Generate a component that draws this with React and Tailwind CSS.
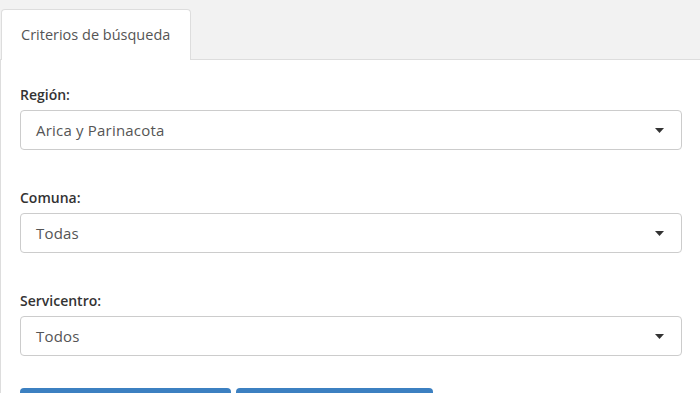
import React from 'react';

const fields = [
  { label: 'Región:', value: 'Arica y Parinacota' },
  { label: 'Comuna:', value: 'Todas' },
  { label: 'Servicentro:', value: 'Todos' },
];

const Caret = () => (
  <svg width="9" height="5" viewBox="0 0 9 5" className="shrink-0">
    <path d="M0 0 L9 0 L4.5 5 Z" fill="#333" />
  </svg>
);

const SelectField = ({ label, value }) => (
  <div className="mb-[38px]">
    <label className="block text-[14px] font-semibold text-[#333] leading-[20px] mb-[5px]">
      {label}
    </label>
    <div className="h-[40px] flex items-center justify-between border border-[#ccc] rounded-[4px] bg-white pl-[15px] pr-[17px] w-[662px]">
      <span className="text-[15px] text-[#555] tracking-[0.2px]">{value}</span>
      <Caret />
    </div>
  </div>
);

export default function App() {
  return (
    <div
      className="w-[700px] h-[393px] overflow-hidden bg-[#f2f2f2]"
      style={{ fontFamily: '"Open Sans", "Liberation Sans", sans-serif' }}
    >
      <div className="pt-[9px] pl-[1px] flex">
        <div className="h-[51px] w-[190px] bg-white border border-b-0 border-[#ddd] rounded-t-[4px] flex items-center pl-[19px] -mb-px relative z-10">
          <span className="text-[14.5px] text-[#555]">Criterios de búsqueda</span>
        </div>
      </div>
      <div className="bg-white border-t border-l border-[#ddd] h-full pt-[25px] pl-[19px]">
        {fields.map((f) => (
          <SelectField key={f.label} label={f.label} value={f.value} />
        ))}
        <div className="flex gap-[5px] -mt-[6px]">
          <div className="w-[211px] h-[34px] bg-[#3c80c1] rounded-[4px]" />
          <div className="w-[197px] h-[34px] bg-[#3c80c1] rounded-[4px]" />
        </div>
      </div>
    </div>
  );
}
